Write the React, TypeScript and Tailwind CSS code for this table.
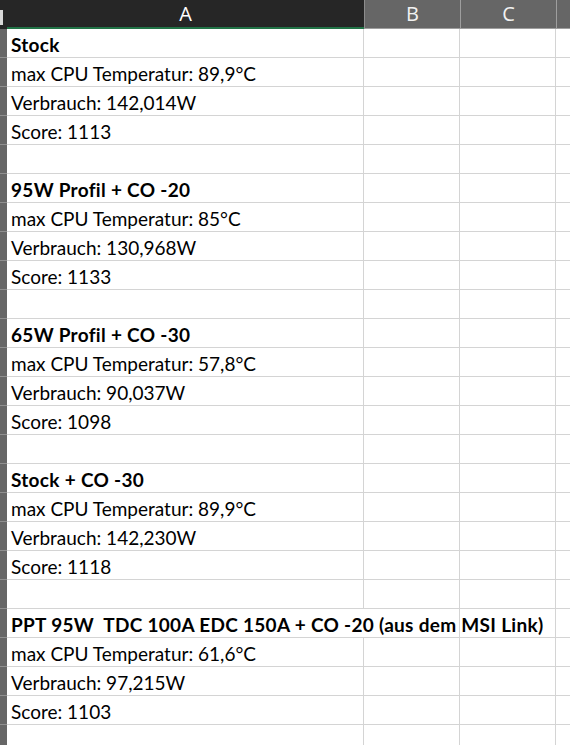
import React from 'react';

type Row = { text: string; bold?: boolean; span?: boolean };

const ROWS: Row[] = [
  { text: 'Stock', bold: true },
  { text: 'max CPU Temperatur: 89,9°C' },
  { text: 'Verbrauch: 142,014W' },
  { text: 'Score: 1113' },
  { text: '' },
  { text: '95W Profil + CO -20', bold: true },
  { text: 'max CPU Temperatur: 85°C' },
  { text: 'Verbrauch: 130,968W' },
  { text: 'Score: 1133' },
  { text: '' },
  { text: '65W Profil + CO -30', bold: true },
  { text: 'max CPU Temperatur: 57,8°C' },
  { text: 'Verbrauch: 90,037W' },
  { text: 'Score: 1098' },
  { text: '' },
  { text: 'Stock + CO -30', bold: true },
  { text: 'max CPU Temperatur: 89,9°C' },
  { text: 'Verbrauch: 142,230W' },
  { text: 'Score: 1118' },
  { text: '' },
  { text: 'PPT 95W  TDC 100A EDC 150A + CO -20 (aus dem MSI Link)', bold: true, span: true },
  { text: 'max CPU Temperatur: 61,6°C' },
  { text: 'Verbrauch: 97,215W' },
  { text: 'Score: 1103' },
  { text: '' },
];

const cellFont = { fontFamily: 'Lato, "Open Sans", sans-serif' };

export default function App() {
  return (
    <div className="w-[570px] h-[745px] overflow-hidden bg-white">
      {/* Column headers */}
      <div className="flex h-[29px]">
        <div className="w-[7px] shrink-0 bg-[#262626] relative">
          <div className="absolute left-0 top-[10px] w-[3px] h-[15px] bg-[#d9d9d9]" />
        </div>
        <div
          className="w-[357px] shrink-0 bg-[#262626] border-b-2 border-[#217346] flex items-center justify-center text-white text-[20px] pt-[1px]"
          style={{ fontFamily: '"Open Sans", "Noto Sans", sans-serif' }}
        >
          A
        </div>
        <div
          className="w-[96px] shrink-0 bg-[#666666] border-l border-[#8c8c8c] border-b border-b-[#9e9e9e] flex items-center justify-center text-[#f2f2f2] text-[20px]"
          style={{ fontFamily: '"Open Sans", "Noto Sans", sans-serif' }}
        >
          B
        </div>
        <div
          className="w-[96px] shrink-0 bg-[#666666] border-l border-[#9e9e9e] border-b border-b-[#9e9e9e] flex items-center justify-center text-[#f2f2f2] text-[20px]"
          style={{ fontFamily: '"Open Sans", "Noto Sans", sans-serif' }}
        >
          C
        </div>
        <div className="flex-1 bg-[#666666] border-l border-[#9e9e9e] border-b border-b-[#9e9e9e]" />
      </div>

      {/* Sheet rows */}
      {ROWS.map((row, i) => (
        <div key={i} className="flex h-[29px]">
          <div className="w-[7px] shrink-0 bg-[#666666] border-b border-[#8f8f8f]" />
          {row.span ? (
            <div
              className="w-[453px] shrink-0 border-b border-r border-[#d4d4d4] flex items-end pl-[4px] text-[19px] leading-[24px] text-black whitespace-pre font-bold tracking-[0.3px]"
              style={cellFont}
            >
              {row.text}
            </div>
          ) : (
            <>
              <div
                className={`w-[357px] shrink-0 border-b border-r border-[#d4d4d4] flex items-end pl-[4px] text-[19px] leading-[24px] text-black whitespace-pre ${row.bold ? 'font-bold tracking-[0.3px]' : ''}`}
                style={cellFont}
              >
                {row.text}
              </div>
              <div className="w-[96px] shrink-0 border-b border-r border-[#d4d4d4]" />
            </>
          )}
          <div className="w-[96px] shrink-0 border-b border-r border-[#d4d4d4]" />
          <div className="flex-1 border-b border-[#d4d4d4]" />
        </div>
      ))}
    </div>
  );
}
